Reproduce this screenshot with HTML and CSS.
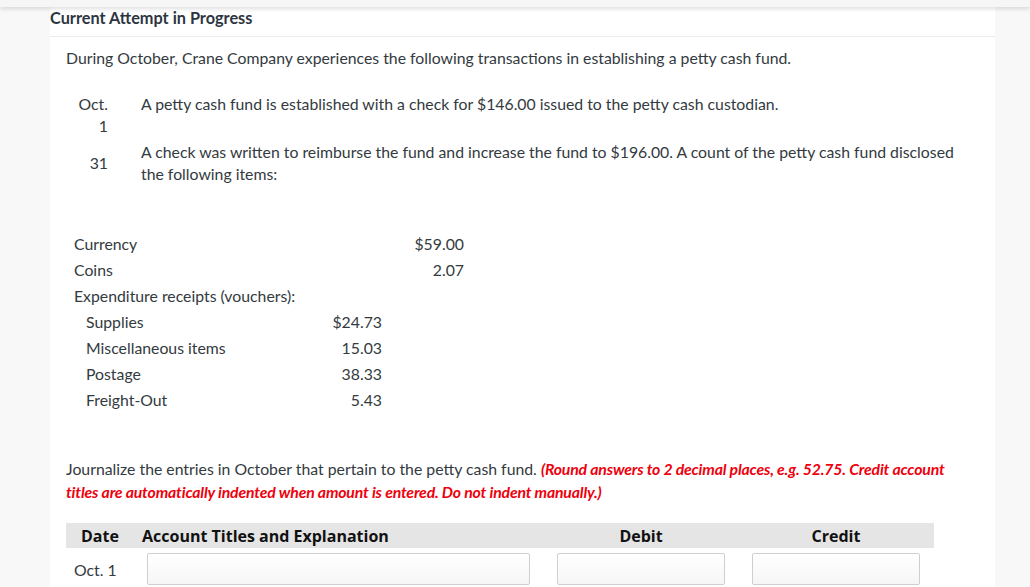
FILE: index.html
```html
<!DOCTYPE html>
<html>
<head>
<meta charset="utf-8">
<link rel="stylesheet" href="styles.css">
</head>
<body>
<div class="topbar"></div>
<div class="panel">
  <div class="attempt-title">Current Attempt in Progress</div>
  <div class="content">
    <p class="intro">During October, Crane Company experiences the following transactions in establishing a petty cash fund.</p>

    <div class="trans">
      <div class="tdate">Oct. 1</div>
      <div class="tdesc">A petty cash fund is established with a check for $146.00 issued to the petty cash custodian.</div>
      <div class="tdate mid">31</div>
      <div class="tdesc second">A check was written to reimburse the fund and increase the fund to $196.00. A count of the petty cash fund disclosed the following items:</div>
    </div>

    <div class="items">
      <div class="lbl">Currency</div><div class="num1"></div><div class="num2">$59.00</div>
      <div class="lbl">Coins</div><div class="num1"></div><div class="num2">2.07</div>
      <div class="lbl">Expenditure receipts (vouchers):</div><div class="num1"></div><div class="num2"></div>
      <div class="lbl sub">Supplies</div><div class="num1">$24.73</div><div class="num2"></div>
      <div class="lbl sub">Miscellaneous items</div><div class="num1">15.03</div><div class="num2"></div>
      <div class="lbl sub">Postage</div><div class="num1">38.33</div><div class="num2"></div>
      <div class="lbl sub">Freight-Out</div><div class="num1">5.43</div><div class="num2"></div>
    </div>

    <p class="instr">Journalize the entries in October that pertain to the petty cash fund. <em class="warn">(Round answers to 2 decimal places, e.g. 52.75. Credit account titles are automatically indented when amount is entered. Do not indent manually.)</em></p>

    <div class="journal">
      <div class="jhead">
        <div class="cdate hdate">Date</div>
        <div class="cacct hacct">Account Titles and Explanation</div>
        <div class="camt gap">Debit</div>
        <div class="camt">Credit</div>
      </div>
      <div class="jrow">
        <div class="cdate rdate">Oct. 1</div>
        <div class="cacct"><input class="field wide" type="text"></div>
        <div class="camt gap"><input class="field" type="text"></div>
        <div class="camt"><input class="field" type="text"></div>
      </div>
    </div>
  </div>
</div>
</body>
</html>
```
FILE: styles.css
```css
html, body {
  margin: 0;
  padding: 0;
}
body {
  background: #f8f8f8;
  font-family: Lato, "Liberation Sans", sans-serif;
  font-size: 15.8px;
  color: #333a40;
  overflow: hidden;
}
.topbar {
  height: 7px;
  background: #f6f6f6;
  box-shadow: 0 2px 4px rgba(0,0,0,0.13);
  position: relative;
  z-index: 2;
}
.panel {
  margin-left: 50px;
  width: 945px;
  background: #fff;
  height: 580px;
}
.attempt-title {
  font-weight: bold;
  color: #2d3640;
  font-size: 16.3px;
  line-height: 22px;
  height: 29px;
  border-bottom: 1px solid #ececec;
}
.content {
  padding-left: 16px;
}
.intro {
  margin: 0;
  padding-top: 10px;
  line-height: 22px;
}
.trans {
  display: grid;
  grid-template-columns: 30px 822px;
  column-gap: 33px;
  margin-left: 12px;
  margin-top: 24px;
  line-height: 22px;
  row-gap: 4px;
}
.tdate {
  text-align: right;
}
.tdate.mid {
  align-self: center;
}
.items {
  display: grid;
  grid-template-columns: 245px 63px 82px;
  margin-left: 8px;
  margin-top: 46px;
  line-height: 26px;
}
.lbl.sub {
  padding-left: 12px;
}
.num1, .num2 {
  text-align: right;
}
.instr {
  margin: 44px 0 0 0;
  line-height: 23px;
  width: 890px;
}
.warn {
  color: #ee000c;
  font-weight: bold;
  letter-spacing: -0.17px;
}
.journal {
  margin-top: 20px;
  width: 868px;
}
.jhead {
  display: flex;
  background: #e5e5e5;
  height: 25px;
  align-items: center;
  font-family: "Open Sans", "DejaVu Sans", sans-serif;
  font-weight: bold;
  font-size: 16px;
  color: #111;
}
.cdate {
  flex: none;
  width: 81px;
  box-sizing: border-box;
}
.hdate {
  padding-left: 15px;
  width: 76px;
}
.rdate {
  padding-left: 8px;
}
.cacct {
  flex: none;
  width: 410px;
}
.hacct {
  width: 415px;
}
.camt {
  flex: none;
  width: 168px;
  text-align: center;
}
.camt.gap {
  margin-right: 27px;
}
.jrow {
  display: flex;
  align-items: center;
  padding-top: 5px;
}
.field {
  display: block;
  box-sizing: border-box;
  height: 32px;
  width: 168px;
  border: 1px solid #cfcfcf;
  border-radius: 2px;
  background: linear-gradient(#fff, #f6f6f6);
  margin: 0;
  font: inherit;
}
.field.wide {
  width: 383px;
}
```
